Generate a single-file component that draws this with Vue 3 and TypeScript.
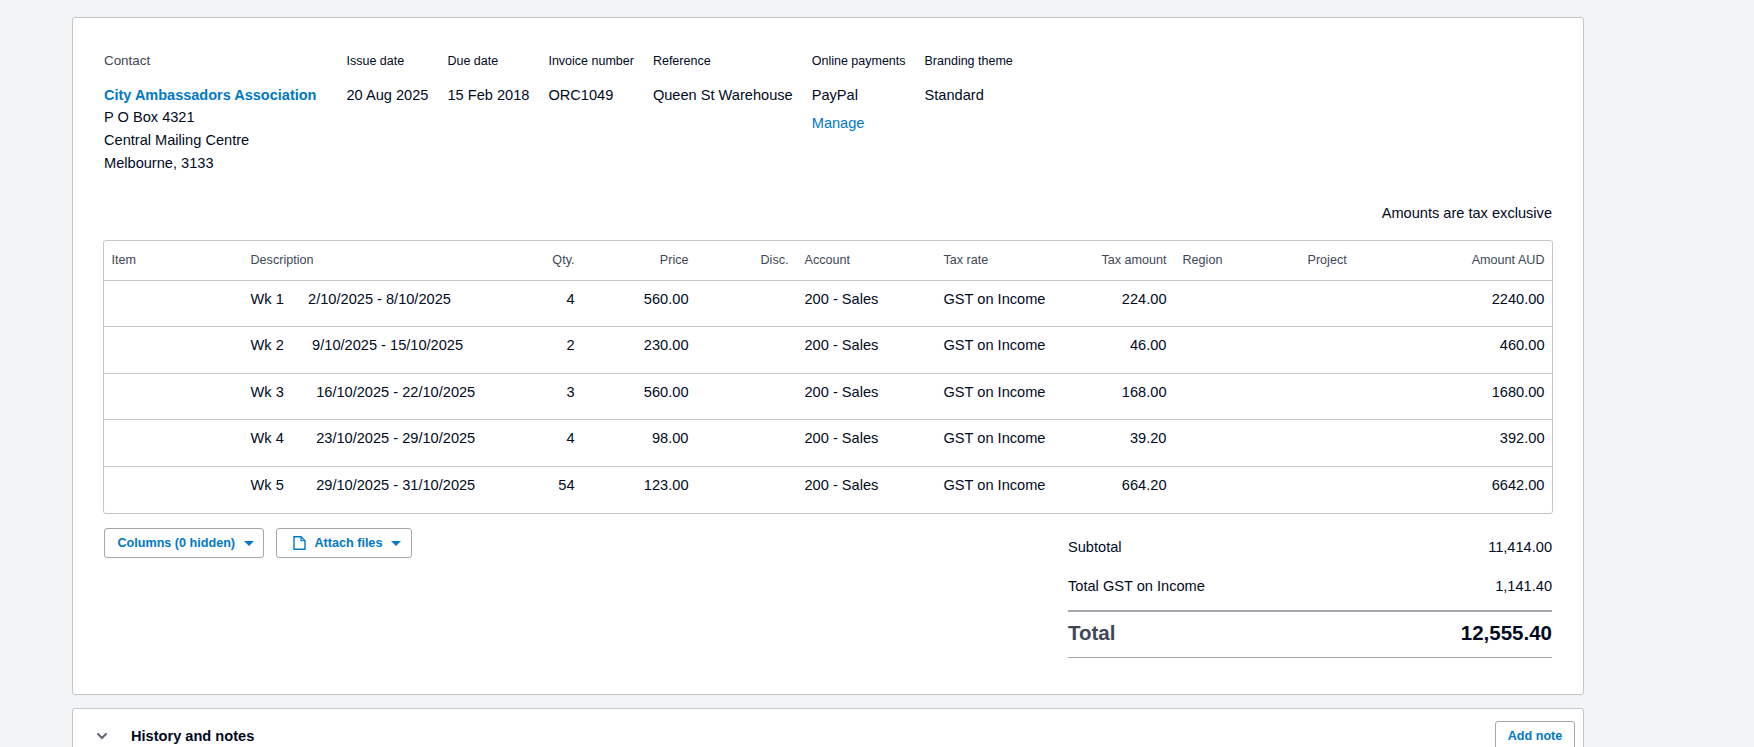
<script setup lang="ts">
interface Line { d: string; q: string; p: string; t: string; a: string }
const lines: Line[] = [
  { d: 'Wk 1      2/10/2025 - 8/10/2025', q: '4', p: '560.00', t: '224.00', a: '2240.00' },
  { d: 'Wk 2       9/10/2025 - 15/10/2025', q: '2', p: '230.00', t: '46.00', a: '460.00' },
  { d: 'Wk 3        16/10/2025 - 22/10/2025', q: '3', p: '560.00', t: '168.00', a: '1680.00' },
  { d: 'Wk 4        23/10/2025 - 29/10/2025', q: '4', p: '98.00', t: '39.20', a: '392.00' },
  { d: 'Wk 5        29/10/2025 - 31/10/2025', q: '54', p: '123.00', t: '664.20', a: '6642.00' },
]
const meta = [
  { label: 'Issue date', value: '20 Aug 2025' },
  { label: 'Due date', value: '15 Feb 2018' },
  { label: 'Invoice number', value: 'ORC1049' },
  { label: 'Reference', value: 'Queen St Warehouse' },
]
</script>

<template>
  <div class="page">
    <section class="card invoice">
      <div class="meta">
        <div class="contact">
          <div class="contact-label">Contact</div>
          <a class="contact-name">City Ambassadors Association</a>
          <div class="addr">P O Box 4321</div>
          <div class="addr">Central Mailing Centre</div>
          <div class="addr">Melbourne, 3133</div>
        </div>
        <div v-for="m in meta" :key="m.label" class="field">
          <div class="label">{{ m.label }}</div>
          <div class="value">{{ m.value }}</div>
        </div>
        <div class="field">
          <div class="label">Online payments</div>
          <div class="value">PayPal</div>
          <a class="manage">Manage</a>
        </div>
        <div class="field">
          <div class="label">Branding theme</div>
          <div class="value">Standard</div>
        </div>
      </div>

      <div class="tax-note">Amounts are tax exclusive</div>

      <div class="table">
        <div class="row head">
          <div>Item</div>
          <div>Description</div>
          <div class="r">Qty.</div>
          <div class="r">Price</div>
          <div class="r">Disc.</div>
          <div>Account</div>
          <div>Tax rate</div>
          <div class="r">Tax amount</div>
          <div>Region</div>
          <div>Project</div>
          <div class="r">Amount AUD</div>
        </div>
        <div v-for="l in lines" :key="l.d" class="row line">
          <div></div>
          <div class="desc">{{ l.d }}</div>
          <div class="r">{{ l.q }}</div>
          <div class="r">{{ l.p }}</div>
          <div class="r"></div>
          <div>200 - Sales</div>
          <div>GST on Income</div>
          <div class="r">{{ l.t }}</div>
          <div></div>
          <div></div>
          <div class="r">{{ l.a }}</div>
        </div>
      </div>

      <div class="below">
        <div class="actions">
          <button class="btn btn-columns" type="button">
            Columns (0 hidden)
            <span class="caret"></span>
          </button>
          <button class="btn btn-attach" type="button">
            <svg class="doc" width="13" height="14" viewBox="0 0 13 14" fill="none">
              <path d="M1 .75h7l4 4v8.5H1z" stroke="#0078c8" stroke-width="1.4" />
              <path d="M8 .75v4h4" stroke="#0078c8" stroke-width="1.2" />
            </svg>
            Attach files
            <span class="caret"></span>
          </button>
        </div>
        <div class="totals">
          <div class="tot-row tot-sub"><span>Subtotal</span><span>11,414.00</span></div>
          <div class="tot-row tot-gst"><span>Total GST on Income</span><span>1,141.40</span></div>
          <div class="tot-row tot-grand"><span class="grand-label">Total</span><span>12,555.40</span></div>
        </div>
      </div>
    </section>

    <section class="card history">
      <svg class="chev" width="12" height="8" viewBox="0 0 12 8" fill="none">
        <path d="M1.4 1.4 6 6l4.6-4.6" stroke="#5a6270" stroke-width="2" />
      </svg>
      <h2 class="history-title">History and notes</h2>
      <button class="btn btn-note" type="button">Add note</button>
    </section>
  </div>
</template>

<style>
html, body { margin: 0; height: 100%; overflow: hidden; background: #f2f3f5; }
</style>

<style scoped>
.page {
  padding: 17px 170px 0 72px;
  font-family: "Liberation Sans", Arial, sans-serif;
  font-size: 14.6px;
  color: #000a1e;
  height: 747px;
  box-sizing: border-box;
  overflow: hidden;
}
.card {
  background: #fff;
  border: 1px solid #c3c6cb;
  border-radius: 3px;
  box-sizing: border-box;
}
.invoice { height: 678px; padding: 0 31px 0 31px; }
.meta { display: flex; gap: 19px; padding-top: 33px; height: 182px; box-sizing: border-box; }
.contact { width: 212px; margin-right: 11.5px; flex: none; }
.contact-label { font-size: 13.4px; color: #404756; line-height: 17px; margin-top: 1px; margin-bottom: 14.5px; }
.contact-name { display: block; font-size: 14.5px; font-weight: 700; color: #0078c8; line-height: 22.6px; white-space: nowrap; }
.addr { line-height: 22.8px; }
.label { font-size: 12.5px; line-height: 17px; white-space: nowrap; margin-top: 1.5px; }
.value { line-height: 23px; margin-top: 14.5px; white-space: nowrap; }
.manage { display: block; color: #0078c8; line-height: 23px; margin-top: 5px; }
.tax-note { text-align: right; line-height: 20px; margin-top: 3px; }
.table { margin: 17px -0.5px 0 -1.5px; border: 1px solid #c3c6cb; border-radius: 3px; }
.row {
  display: grid;
  grid-template-columns: 139px 258px 82px 114px 100px 139px 138px 101px 125px 126px 1fr;
}
.row > div { padding: 0 8px; white-space: pre; }
.row > div:last-child { padding-right: 7px; }
.r { text-align: right; }
.head { height: 38px; padding-bottom: 1px; box-sizing: content-box; align-items: center; font-size: 12.6px; color: #404756; border-bottom: 1px solid #c3c6cb; }
.line { height: 46.4px; padding-top: 8px; box-sizing: border-box; line-height: 20px; border-bottom: 1px solid #c3c6cb; }
.line:last-child { border-bottom: 0; }
.below { display: flex; justify-content: space-between; }
.actions { display: flex; gap: 12px; margin-top: 14px; margin-left: -0.5px; align-items: flex-start; }
.btn {
  font: 700 12.6px "Liberation Sans", Arial, sans-serif;
  color: #0078c8;
  background: #fff;
  border: 1px solid #a3a6ac;
  border-radius: 3px;
  height: 30.5px;
  box-sizing: border-box;
  display: inline-flex;
  align-items: center;
  padding: 0;
  white-space: nowrap;
}
.btn-columns { width: 160px; padding-left: 13px; }
.btn-attach { width: 136px; padding-left: 16px; }
.doc { margin-right: 9px; }
.caret {
  width: 0; height: 0;
  margin-left: 8.5px;
  border-left: 5px solid transparent;
  border-right: 5px solid transparent;
  border-top: 5px solid #0078c8;
}
.totals { width: 484px; margin-top: 16px; }
.tot-row { display: flex; justify-content: space-between; align-items: center; }
.tot-sub { height: 38px; padding-bottom: 4px; box-sizing: border-box; }
.tot-gst { height: 44px; padding-bottom: 6px; box-sizing: border-box; border-bottom: 2px solid #a3a6ac; }
.tot-grand { height: 46.5px; padding-bottom: 2.5px; border-bottom: 1px solid #a3a6ac; font-size: 20.5px; font-weight: 700; box-sizing: border-box; }
.grand-label { color: #404756; }
.history {
  margin-top: 13px;
  height: 80px;
  display: flex;
  align-items: flex-start;
  padding: 0 8px 0 23px;
}
.chev { margin-top: 23px; flex: none; }
.history-title { margin: 0 0 0 23px; font-size: 14.6px; font-weight: 700; line-height: 20px; padding-top: 16.5px; flex: 1; }
.btn-note { width: 80px; justify-content: center; margin-top: 12px; }
</style>
